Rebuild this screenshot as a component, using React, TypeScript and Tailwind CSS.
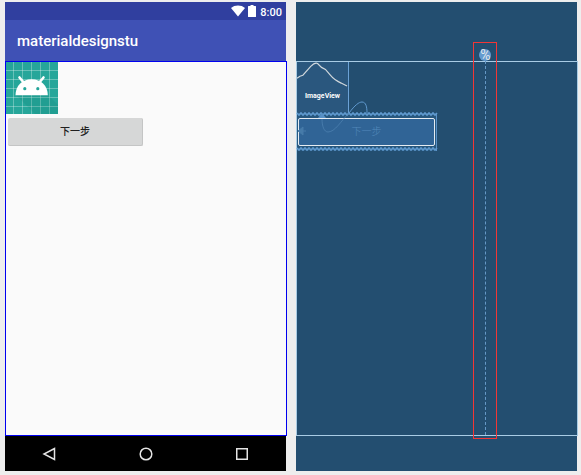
import React from "react";

const fontStack = "font-['Roboto','Noto_Sans_CJK_SC',sans-serif]";

function WifiIcon() {
  return (
    <svg className="h-3 w-4" viewBox="0 0 16 12" aria-hidden="true">
      <path d="M1 3C4.800 -.300 11.200 -.300 15 3L8 11.500Z" fill="#fff" />
    </svg>
  );
}

function BatteryIcon() {
  return (
    <svg className="h-3 w-2" viewBox="0 0 8 12" aria-hidden="true">
      <path d="M2.500 0h3v1H7.500Q8 1 8 1.500V11.500Q8 12 7.500 12H.500Q0 12 0 11.500V1.500Q0 1 .500 1H2.500Z" fill="#fff" />
    </svg>
  );
}

function LauncherImage() {
  const lines = [8, 17, 26, 35, 44];
  return (
    <svg className="block size-[52px]" viewBox="0 0 52 52" role="img" aria-label="Android">
      <rect width="52" height="52" fill="#26a69a" />
      <g stroke="#fff" strokeOpacity=".3" strokeWidth="1">
        {lines.map((n) => (
          <React.Fragment key={n}>
            <path d={`M${n - 0.5} 0V52`} />
            <path d={`M0 ${n + 0.5}H52`} />
          </React.Fragment>
        ))}
      </g>
      <path d="M10 33L29 52H52V43L42 33Z" fill="#00695c" fillOpacity=".12" />
      <path d="M13.500 15.500L18.500 21.500M37.500 15.500L32.500 21.500" stroke="#fff" strokeWidth="2.600" strokeLinecap="round" />
      <path d="M9.500 33.300C9.500 24 16 17.300 25.600 17.300S41.800 24 41.800 33.300Z" fill="#fff" />
      <circle cx="18.800" cy="26.700" r="1.600" fill="#26a69a" />
      <circle cx="31.800" cy="26.700" r="1.600" fill="#26a69a" />
    </svg>
  );
}

function NavButton({ label, children }: { label: string; children: React.ReactNode }) {
  return (
    <button type="button" aria-label={label} className="flex h-full w-8 items-center justify-center">
      <svg className="size-4" viewBox="0 0 16 16" fill="none" stroke="#e4e4e4" strokeWidth="1.500">
        {children}
      </svg>
    </button>
  );
}

function DevicePreview() {
  return (
    <section className="flex min-w-0 flex-col">
      <div className="flex h-[18px] shrink-0 items-center justify-end bg-[#303f9f] pr-1">
        <WifiIcon />
        <span className="ml-[2px] flex">
          <BatteryIcon />
        </span>
        <span className="ml-1 pt-1 text-[11px] leading-3 font-medium text-white">8:00</span>
      </div>
      <header className="flex h-[41px] shrink-0 items-center bg-[#3f51b5] px-3">
        <h1 className="text-[15px] leading-5 font-medium text-white">materialdesignstu</h1>
      </header>
      <main className="-mr-px flex-1 border border-[#0000f0] bg-[#fafafa]">
        <LauncherImage />
        <button
          type="button"
          className="mt-1 ml-[2px] flex h-7 w-[135px] items-center justify-center rounded-[2px] border-r border-b border-[#c4c5c5] bg-[#d6d7d7] text-[10px] leading-4 font-medium text-[#202020]"
        >
          下一步
        </button>
      </main>
      <nav className="flex h-[35px] shrink-0 items-center justify-between bg-black px-7">
        <NavButton label="Back">
          <path d="M13.500 2.500V13.500L3 8Z" />
        </NavButton>
        <NavButton label="Home">
          <circle cx="8" cy="8" r="5.800" />
        </NavButton>
        <NavButton label="Recent apps">
          <rect x="2.750" y="2.750" width="10.500" height="10.500" />
        </NavButton>
      </nav>
    </section>
  );
}

function BlueprintImage() {
  return (
    <div className="relative flex h-[51px] w-[52px] justify-center border-r border-[#6ba2d6] bg-[#2a577e]">
      <svg className="absolute inset-0 h-full w-full" viewBox="0 0 52 51" fill="none" aria-hidden="true">
        <path
          d="M0 16L3 14L6 13L14 4C17 1 19 0 21 1L25 5L29 7L34 13Q38 18 45 21L51 24"
          stroke="#d0d7dc"
          strokeWidth="1.200"
        />
      </svg>
      <span className="pt-7 text-[7px] leading-3 font-bold text-white">ImageView</span>
    </div>
  );
}

function BlueprintButton() {
  const edge = (y: number) =>
    "M0 " + y + Array.from({ length: 70 }, (_, i) => `L${i * 2 + 2} ${y + (i % 2 === 0 ? 2 : 0)}`).join("");
  return (
    <div className="relative w-[140px] border-r border-[#5b93c9] bg-[#28587f] pt-[5px] pb-[5px] pl-px">
      <div className="flex h-7 w-[137px] items-center justify-center rounded-[2px] border border-[#e6ecf2] bg-[#306496] text-[10px] leading-4 font-light text-[#5389ba]">
        下一步
      </div>
      <svg
        className="absolute -top-3 left-0 h-[50px] w-[140px] overflow-visible"
        viewBox="0 0 140 50"
        fill="none"
        aria-hidden="true"
      >
        <path d={edge(12)} stroke="#609acf" strokeWidth="1.600" />
        <path d={edge(47)} stroke="#609acf" strokeWidth="1.600" />
        <path d="M52 12C58 4 62 1 65 1C69 1 70 6 70 12" stroke="#609acf" />
        <path d="M52 12C44 20 38 31 31 31C27 31 25 25 25 18" stroke="#5589b8" strokeOpacity=".6" />
        <path d="M25 12L29 17H21Z" fill="#5790c5" />
        <path d="M1 30L6 26V34ZM6 30H9" fill="#467ba9" stroke="#467ba9" />
      </svg>
    </div>
  );
}

function PercentGuideline() {
  return (
    <div className="absolute -top-5 -bottom-1 left-[63%] flex w-6 flex-col items-center border border-[#f23636] pt-[6px] pb-[3px]">
      <span className="flex size-3 shrink-0 items-center justify-center rounded-full bg-[#649bd0] text-[14px] leading-3 text-[#e2e7eb]">
        %
      </span>
      <span className="w-0 flex-1 border-l border-dashed border-[#6699c6]" />
    </div>
  );
}

function Blueprint() {
  return (
    <section className="flex min-w-0 flex-col bg-[#234e70] pt-[59px] pb-[35px]">
      <div className="relative -mr-px flex-1 border border-[#a9cce5]">
        <BlueprintImage />
        <BlueprintButton />
        <PercentGuideline />
      </div>
    </section>
  );
}

export default function App() {
  return (
    <div className={`grid h-screen grid-cols-2 gap-[10px] bg-[#eeeeee] pt-[2px] pr-1 pb-1 pl-[5px] ${fontStack}`}>
      <DevicePreview />
      <Blueprint />
    </div>
  );
}
